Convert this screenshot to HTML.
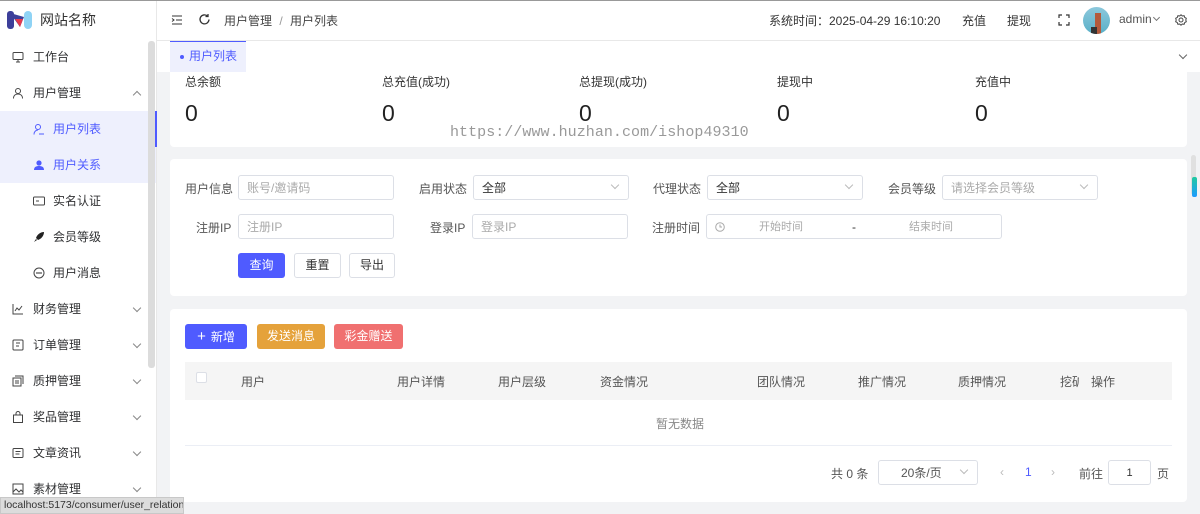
<!DOCTYPE html>
<html><head><meta charset="utf-8"><style>
*{box-sizing:border-box;margin:0;padding:0}
body{width:1200px;height:514px;overflow:hidden;background:#f2f3f5;font-family:"Liberation Sans","Noto Sans CJK SC",sans-serif;font-size:12px;color:#333;position:relative}
.a{position:absolute}
.side{left:0;top:0;width:157px;height:514px;background:#fff;border-right:1px solid #e8e8e8}
.mi{position:absolute;left:0;width:156px;height:36px;line-height:36px;font-size:12px;color:#303133}
.mi .ic{position:absolute;left:12px;top:12px;width:12px;height:12px}
.mi .t{position:absolute;left:33px}
.mi.sub .t{left:53px}
.mi.sub .ic{left:33px}
.mi .ar{position:absolute;left:134px;top:14px;width:6px;height:6px;border-right:1px solid #888;border-bottom:1px solid #888;transform:rotate(45deg)}
.card{background:#fff;border-radius:4px}
.lbl{position:absolute;font-size:12px;color:#555;text-align:right}
.inp{position:absolute;height:25px;border:1px solid #dcdfe6;border-radius:3px;background:#fff;font-size:12px;line-height:24px;padding-left:8px;color:#aaa}
.inp.v{color:#333}
.inp .dd{position:absolute;right:10px;top:6px;width:6px;height:6px;border-right:1px solid #bbb;border-bottom:1px solid #bbb;transform:rotate(45deg)}
.btn{position:absolute;height:25px;border-radius:3px;font-size:12px;line-height:25px;text-align:center}
.th{position:absolute;top:373px;font-size:12px;color:#555}
</style></head><body>
<div class="a" style="left:0;top:0;width:1200px;height:1px;background:#999;z-index:9"></div>
<!-- sidebar -->
<div class="a side">
 <svg class="a" style="left:7px;top:9px" width="26" height="22" viewBox="0 0 26 22"><rect x="0" y="2" width="7" height="18" rx="3" fill="#3d3f9a"/><path d="M3 4 L13 18 L17 8 Z" fill="#3d3f9a"/><path d="M8 10 L13 18 L16 10 Z" fill="#e5394d"/><rect x="17" y="2" width="8" height="18" rx="4" fill="#8fd3f5"/></svg>
 <div class="a" style="left:40px;top:10px;font-size:14px;color:#333">网站名称</div>
 <div class="mi" style="top:39px"><svg class="ic" viewBox="0 0 12 12" fill="none" stroke="#444"><rect x="1" y="1.5" width="10" height="7" rx="1"/><path d="M4 11h4M6 8.5v2.5"/></svg><span class="t">工作台</span></div>
 <div class="mi" style="top:75px"><svg class="ic" viewBox="0 0 12 12" fill="none" stroke="#444"><circle cx="6" cy="4" r="2.5"/><path d="M1.5 11.5c0-3 2-4.5 4.5-4.5s4.5 1.5 4.5 4.5"/></svg><span class="t">用户管理</span><span class="ar" style="transform:rotate(225deg);top:17px"></span></div>
 <div class="mi sub" style="top:111px;background:#eef0fd;color:#4f5bff"><svg class="ic" viewBox="0 0 12 12" fill="none" stroke="#4f5bff"><circle cx="5" cy="4" r="2.5"/><path d="M1 11.5c0-3 2-4.5 4-4.5M6 11h5"/></svg><span class="t">用户列表</span></div>
 <div class="mi sub" style="top:147px;background:#eef0fd;color:#4f5bff"><svg class="ic" viewBox="0 0 12 12" fill="#4f5bff"><circle cx="6" cy="4" r="2.6"/><path d="M1 11c0-3 2-4 5-4s5 1 5 4z"/></svg><span class="t">用户关系</span></div>
 <div class="mi sub" style="top:183px"><svg class="ic" viewBox="0 0 12 12" fill="none" stroke="#444"><rect x="0.5" y="2" width="11" height="8" rx="1"/><path d="M3 6h3"/></svg><span class="t">实名认证</span></div>
 <div class="mi sub" style="top:219px"><svg class="ic" viewBox="0 0 12 12" fill="#222"><path d="M11 1 C7 1 4 4 3 7 L5 9 C8 8 11 5 11 1Z M3 8 L1 11 L4 9Z"/></svg><span class="t">会员等级</span></div>
 <div class="mi sub" style="top:255px"><svg class="ic" viewBox="0 0 12 12" fill="none" stroke="#444"><circle cx="6" cy="6" r="5"/><circle cx="4" cy="6" r=".4"/><circle cx="6" cy="6" r=".4"/><circle cx="8" cy="6" r=".4"/></svg><span class="t">用户消息</span></div>
 <div class="mi" style="top:291px"><svg class="ic" viewBox="0 0 12 12" fill="none" stroke="#444"><path d="M1 1v10h10M3 8l2-3 2 2 3-4"/></svg><span class="t">财务管理</span><span class="ar"></span></div>
 <div class="mi" style="top:327px"><svg class="ic" viewBox="0 0 12 12" fill="none" stroke="#444"><rect x="1" y="1" width="10" height="10" rx="1"/><path d="M4 4h4M4 7h3"/></svg><span class="t">订单管理</span><span class="ar"></span></div>
 <div class="mi" style="top:363px"><svg class="ic" viewBox="0 0 12 12" fill="none" stroke="#444"><rect x="1" y="3" width="8" height="8"/><path d="M3 1h8v8M3 6h4M3 8h4"/></svg><span class="t">质押管理</span><span class="ar"></span></div>
 <div class="mi" style="top:399px"><svg class="ic" viewBox="0 0 12 12" fill="none" stroke="#444"><path d="M1.5 4h9v7.5h-9z M4 4V2.5a2 2 0 0 1 4 0V4"/></svg><span class="t">奖品管理</span><span class="ar"></span></div>
 <div class="mi" style="top:435px"><svg class="ic" viewBox="0 0 12 12" fill="none" stroke="#444"><rect x="1" y="1.5" width="10" height="9" rx="1"/><path d="M3.5 4.5h5M3.5 7h4"/></svg><span class="t">文章资讯</span><span class="ar"></span></div>
 <div class="mi" style="top:471px"><svg class="ic" viewBox="0 0 12 12" fill="none" stroke="#444"><rect x="1" y="1" width="10" height="10"/><path d="M1 9l3-3 3 3 2-2 2 2"/></svg><span class="t">素材管理</span><span class="ar"></span></div>
 <div class="a" style="left:148px;top:41px;width:7px;height:327px;background:#dcdcdc;border-radius:3px"></div>
 <div class="a" style="left:155px;top:111px;width:2px;height:36px;background:#4f5bff"></div>
</div>
<div class="a" style="left:0;top:497px;width:184px;height:17px;background:#dcdcdc;border:1px solid #c8c8c8;font-size:10.5px;color:#333;line-height:15px;padding-left:3px;z-index:5;white-space:nowrap;overflow:hidden">localhost:5173/consumer/user_relation</div>
<!-- header -->
<div class="a" style="left:157px;top:1px;width:1043px;height:40px;background:#fff;border-bottom:1px solid #e8e8e8"></div>
<svg class="a" style="left:171px;top:14px" width="12" height="12" viewBox="0 0 12 12" stroke="#333" fill="none"><path d="M1 2h10M5 6h6M1 10h10M1 4.5l2 1.5-2 1.5"/></svg>
<svg class="a" style="left:198px;top:13px" width="13" height="13" viewBox="0 0 13 13" stroke="#333" fill="none" stroke-width="1.3"><path d="M11 6.5A4.5 4.5 0 1 1 9.5 3"/><path d="M10 1v2.5H7.5"/></svg>
<div class="a" style="left:224px;top:12px;font-size:12px;color:#444">用户管理 <span style="color:#999;margin:0 4px">/</span> 用户列表</div>
<div class="a" style="left:769px;top:12px;font-size:12px;color:#333">系统时间：2025-04-29 16:10:20</div>
<div class="a" style="left:962px;top:12px;font-size:12px;color:#333">充值</div>
<div class="a" style="left:1007px;top:12px;font-size:12px;color:#333">提现</div>
<svg class="a" style="left:1058px;top:14px" width="12" height="12" viewBox="0 0 12 12" stroke="#333" fill="none" stroke-width="1.2"><path d="M1 4V1h3M8 1h3v3M11 8v3H8M4 11H1V8"/></svg>
<div class="a" style="left:1083px;top:7px;width:27px;height:27px;border-radius:50%;background:linear-gradient(#8cc8dc,#5ab0c8);overflow:hidden"><div class="a" style="left:12px;top:6px;width:6px;height:21px;background:#b45a3c"></div><div class="a" style="left:8px;top:20px;width:6px;height:7px;background:#333"></div></div>
<div class="a" style="left:1119px;top:12px;font-size:12px;color:#555">admin</div>
<div class="a" style="left:1154px;top:15px;width:5px;height:5px;border-right:1px solid #777;border-bottom:1px solid #777;transform:rotate(45deg)"></div>
<svg class="a" style="left:1175px;top:14px" width="12" height="12" viewBox="0 0 12 12" stroke="#444" fill="none"><circle cx="6" cy="6" r="2"/><path d="M6 .8l1.3 1.2 1.8-.3.6 1.7 1.6.9-.5 1.7.5 1.7-1.6.9-.6 1.7-1.8-.3L6 11.2 4.7 10l-1.8.3-.6-1.7L.7 7.7 1.2 6 .7 4.3l1.6-.9.6-1.7 1.8.3z"/></svg>
<!-- tabs -->
<div class="a" style="left:157px;top:41px;width:1043px;height:31px;background:#fff"></div>
<div class="a" style="left:170px;top:41px;width:76px;height:31px;background:#eef0fd;border-top:1px solid #4f5bff;color:#4f5bff;font-size:12px;line-height:29px;padding-left:10px"><span style="display:inline-block;width:4px;height:4px;border-radius:50%;background:#4f5bff;vertical-align:middle;margin-right:5px"></span>用户列表</div>
<div class="a" style="left:1180px;top:52px;width:6px;height:6px;border-right:1px solid #666;border-bottom:1px solid #666;transform:rotate(45deg)"></div>
<!-- card1 -->
<div class="a card" style="left:170px;top:72px;width:1017px;height:75px;border-radius:0 0 4px 4px"></div>
<div class="a" style="left:185px;top:73px;font-size:12px;color:#333">总余额</div>
<div class="a" style="left:382px;top:73px;font-size:12px;color:#333">总充值(成功)</div>
<div class="a" style="left:579px;top:73px;font-size:12px;color:#333">总提现(成功)</div>
<div class="a" style="left:777px;top:73px;font-size:12px;color:#333">提现中</div>
<div class="a" style="left:975px;top:73px;font-size:12px;color:#333">充值中</div>
<div class="a" style="left:185px;top:100px;font-size:23px;color:#222">0</div>
<div class="a" style="left:382px;top:100px;font-size:23px;color:#222">0</div>
<div class="a" style="left:579px;top:100px;font-size:23px;color:#222">0</div>
<div class="a" style="left:777px;top:100px;font-size:23px;color:#222">0</div>
<div class="a" style="left:975px;top:100px;font-size:23px;color:#222">0</div>
<div class="a" style="left:450px;top:124px;font-family:'Liberation Mono',monospace;font-size:15px;color:#999;letter-spacing:0.05px">https://www.huzhan.com/ishop49310</div>
<!-- card2 -->
<div class="a card" style="left:170px;top:159px;width:1017px;height:137px"></div>
<div class="lbl" style="left:185px;top:180px">用户信息</div>
<div class="inp" style="left:238px;top:175px;width:156px">账号/邀请码</div>
<div class="lbl" style="left:419px;top:180px">启用状态</div>
<div class="inp v" style="left:473px;top:175px;width:156px">全部<span class="dd"></span></div>
<div class="lbl" style="left:653px;top:180px">代理状态</div>
<div class="inp v" style="left:707px;top:175px;width:156px">全部<span class="dd"></span></div>
<div class="lbl" style="left:888px;top:180px">会员等级</div>
<div class="inp" style="left:942px;top:175px;width:156px">请选择会员等级<span class="dd"></span></div>
<div class="lbl" style="left:196px;top:219px">注册IP</div>
<div class="inp" style="left:238px;top:214px;width:156px">注册IP</div>
<div class="lbl" style="left:430px;top:219px">登录IP</div>
<div class="inp" style="left:472px;top:214px;width:156px">登录IP</div>
<div class="lbl" style="left:652px;top:219px">注册时间</div>
<div class="inp" style="left:706px;top:214px;width:296px"><svg class="a" style="left:8px;top:7px" width="10" height="10" viewBox="0 0 10 10" stroke="#aaa" fill="none"><circle cx="5" cy="5" r="4.3"/><path d="M5 2.5V5h2"/></svg><span class="a" style="left:52px;font-size:11px">开始时间</span><span class="a" style="left:145px;color:#333">-</span><span class="a" style="left:202px;font-size:11px">结束时间</span></div>
<div class="btn" style="left:238px;top:253px;width:47px;background:#4f5bff;color:#fff">查询</div>
<div class="btn" style="left:294px;top:253px;width:47px;border:1px solid #dcdfe6;color:#333;line-height:23px">重置</div>
<div class="btn" style="left:349px;top:253px;width:46px;border:1px solid #dcdfe6;color:#333;line-height:23px">导出</div>
<!-- card3 -->
<div class="a card" style="left:170px;top:309px;width:1017px;height:193px"></div>
<div class="btn" style="left:185px;top:324px;width:62px;background:#4f5bff;color:#fff"><span style="font-size:15px;margin-right:5px">+</span>新增</div>
<div class="btn" style="left:257px;top:324px;width:68px;background:#e5a23b;color:#fff">发送消息</div>
<div class="btn" style="left:334px;top:324px;width:69px;background:#f07070;color:#fff">彩金赠送</div>
<div class="a" style="left:185px;top:362px;width:987px;height:38px;background:#f5f5f5"></div>
<div class="a" style="left:196px;top:372px;width:11px;height:11px;border:1px solid #dcdfe6;background:#fff;border-radius:2px"></div>
<div class="th" style="left:241px">用户</div>
<div class="th" style="left:397px">用户详情</div>
<div class="th" style="left:498px">用户层级</div>
<div class="th" style="left:600px">资金情况</div>
<div class="th" style="left:757px">团队情况</div>
<div class="th" style="left:858px">推广情况</div>
<div class="th" style="left:958px">质押情况</div>
<div class="th" style="left:1060px;width:19px;overflow:hidden;white-space:nowrap">挖矿</div>
<div class="th" style="left:1091px">操作</div>
<div class="a" style="left:656px;top:415px;font-size:12px;color:#888">暂无数据</div>
<div class="a" style="left:185px;top:445px;width:987px;height:1px;background:#ebeef5"></div>
<div class="a" style="left:831px;top:465px;font-size:12px;color:#555">共 0 条</div>
<div class="inp v" style="left:878px;top:460px;width:100px;padding-left:22px;color:#555">20条/页<span class="dd"></span></div>
<div class="a" style="left:1000px;top:465px;font-size:12px;color:#bbb">‹</div>
<div class="a" style="left:1025px;top:465px;font-size:12px;color:#4f5bff">1</div>
<div class="a" style="left:1051px;top:465px;font-size:12px;color:#bbb">›</div>
<div class="a" style="left:1079px;top:465px;font-size:12px;color:#555">前往</div>
<div class="inp v" style="left:1108px;top:460px;width:43px;padding:0;text-align:center;font-size:11px">1</div>
<div class="a" style="left:1157px;top:465px;font-size:12px;color:#555">页</div>
<!-- right scroll -->
<div class="a" style="left:1191px;top:155px;width:5px;height:40px;background:#e0e0e0;border-radius:3px"></div>
<div class="a" style="left:1192px;top:177px;width:5px;height:20px;background:linear-gradient(#20c9a0,#1e9bff);border-radius:2px"></div>
</body></html>
